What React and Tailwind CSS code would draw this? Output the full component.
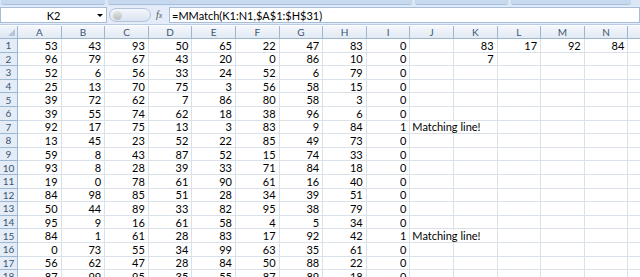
import React from "react";

const data = [
  [53, 43, 93, 50, 65, 22, 47, 83, 0],
  [96, 79, 67, 43, 20, 0, 86, 10, 0],
  [52, 6, 56, 33, 24, 52, 6, 79, 0],
  [25, 13, 70, 75, 3, 56, 58, 15, 0],
  [39, 72, 62, 7, 86, 80, 58, 3, 0],
  [39, 55, 74, 62, 18, 38, 96, 6, 0],
  [92, 17, 75, 13, 3, 83, 9, 84, 1],
  [13, 45, 23, 52, 22, 85, 49, 73, 0],
  [59, 8, 43, 87, 52, 15, 74, 33, 0],
  [93, 8, 28, 39, 33, 71, 84, 18, 0],
  [19, 0, 78, 61, 90, 61, 16, 40, 0],
  [84, 98, 85, 51, 28, 34, 39, 51, 0],
  [50, 44, 89, 33, 82, 95, 38, 79, 0],
  [95, 9, 16, 61, 58, 4, 5, 34, 0],
  [84, 1, 61, 28, 83, 17, 92, 42, 1],
  [0, 73, 55, 34, 99, 63, 35, 61, 0],
  [56, 62, 47, 28, 84, 50, 88, 22, 0],
  [87, 99, 95, 35, 55, 87, 89, 18, 0],
];

const cols = ["A", "B", "C", "D", "E", "F", "G", "H", "I", "J", "K", "L", "M", "N"];

function cellValue(r, c) {
  if (c < 9) return { v: data[r][c], right: true };
  if (c === 9) return data[r][8] === 1 ? { v: "Matching line!", right: false } : null;
  if (r === 0) {
    const extra = { 10: 83, 11: 17, 12: 92, 13: 84 };
    return { v: extra[c], right: true };
  }
  if (r === 1 && c === 10) return { v: 7, right: true };
  return null;
}

export default function App() {
  const font = { fontFamily: 'Lato, "Liberation Sans", Arial, sans-serif' };
  return (
    <div className="w-[640px] h-[277px] overflow-hidden bg-white relative" style={font}>
      {/* ribbon bottom strip */}
      <div className="h-[6px] bg-[#dbe7f5] flex gap-[3px] px-[1px]">
        <div className="w-[104px] h-[5px] rounded-b-[3px] bg-[#c7d9ee] border-b border-[#a8c0de]" />
        <div className="w-[304px] h-[5px] rounded-b-[3px] bg-[#c7d9ee] border-b border-[#a8c0de]" />
        <div className="w-[93px] h-[5px] rounded-b-[3px] bg-[#c7d9ee] border-b border-[#a8c0de]" />
        <div className="w-[120px] h-[5px] rounded-b-[3px] bg-[#c7d9ee] border-b border-[#a8c0de]" />
      </div>
      {/* formula bar */}
      <div className="h-[19px] bg-[#e3ecf8] flex items-center border-b border-[#b9cbe2]">
        <div className="w-[107px] h-[16px] bg-white border border-[#a6bdd9] flex items-center relative">
          <span className="flex-1 text-center text-[11px] text-black leading-none">K2</span>
          <span className="absolute right-[3px] top-[6px] w-0 h-0 border-l-[3px] border-r-[3px] border-t-[3px] border-l-transparent border-r-transparent border-t-black" />
        </div>
        <div className="w-[62px] h-[16px] flex items-center pl-[2px]">
          <div className="w-[42px] h-[14px] rounded-full bg-gradient-to-b from-[#f4f7fb] to-[#d9e3f0] border border-[#b3c4da] flex items-center pl-[3px]">
            <div className="w-[9px] h-[9px] rounded-full bg-gradient-to-b from-[#e6e6e6] to-[#bdbdbd]" />
          </div>
          <span className="ml-[5px] text-[10px] italic text-[#555] leading-none" style={{ fontFamily: '"Liberation Serif", serif' }}>
            f<span className="text-[8px]">x</span>
          </span>
        </div>
        <div className="flex-1 h-[16px] bg-white border border-[#a6bdd9] flex items-center pl-[2px]">
          <span className="text-[11px] text-black leading-none">=MMatch(K1:N1,$A$1:$H$31)</span>
        </div>
      </div>
      {/* sheet */}
      <div className="mt-[1px] grid grid-cols-[18px_repeat(14,43.6px)_1fr]">
        <div className="h-[13px] bg-gradient-to-b from-[#f0f4fa] to-[#dce6f3] border-r border-b border-[#9eb6ce] relative">
          <span className="absolute right-[2px] bottom-[2px] w-0 h-0 border-b-[7px] border-l-[7px] border-b-[#b4c5d9] border-l-transparent" />
        </div>
        {cols.map((c) => (
          <div
            key={c}
            className="h-[13px] bg-gradient-to-b from-[#f4f7fb] to-[#e2eaf5] border-r border-b border-[#9eb6ce] flex items-center justify-center text-[10px] leading-none text-[#3b5570]"
          >
            {c}
          </div>
        ))}
        <div className="h-[13px] bg-gradient-to-b from-[#f4f7fb] to-[#e2eaf5] border-b border-[#9eb6ce]" />
        {data.map((row, r) => (
          <React.Fragment key={r}>
            <div className="h-[13.6px] bg-[#e4ecf7] border-r border-b border-[#9eb6ce] flex items-center justify-center text-[10px] leading-none text-[#3b5570]">
              {r + 1}
            </div>
            {cols.map((c, ci) => {
              const cv = cellValue(r, ci);
              return (
                <div
                  key={c}
                  className={
                    "h-[13.6px] border-r border-b border-[#dbe1e8] flex items-center text-[11px] leading-none text-black whitespace-nowrap overflow-visible relative z-0 " +
                    (cv && cv.right ? "justify-end pr-[3px]" : "justify-start pl-[2px]")
                  }
                >
                  {cv ? <span className={cv.right ? "" : "relative z-10 bg-white pr-[2px]"}>{cv.v}</span> : null}
                </div>
              );
            })}
            <div className="h-[13.6px] border-b border-[#dbe1e8]" />
          </React.Fragment>
        ))}
      </div>
    </div>
  );
}
